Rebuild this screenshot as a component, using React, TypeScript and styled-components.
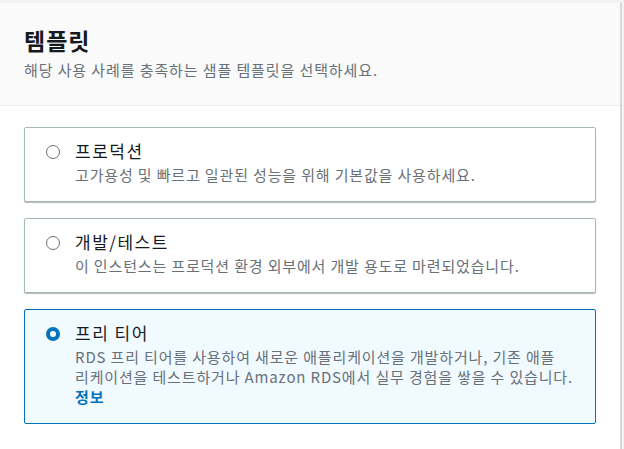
import React from "react";
import styled, { createGlobalStyle } from "styled-components";

type Option = {
  id: string;
  title: string;
  description: string;
  info?: string;
};

const options: Option[] = [
  {
    id: "prod",
    title: "프로덕션",
    description: "고가용성 및 빠르고 일관된 성능을 위해 기본값을 사용하세요.",
  },
  {
    id: "dev",
    title: "개발/테스트",
    description: "이 인스턴스는 프로덕션 환경 외부에서 개발 용도로 마련되었습니다.",
  },
  {
    id: "free",
    title: "프리 티어",
    description:
      "RDS 프리 티어를 사용하여 새로운 애플리케이션을 개발하거나, 기존 애플\n리케이션을 테스트하거나 Amazon RDS에서 실무 경험을 쌓을 수 있습니다.",
    info: "정보",
  },
];

const GlobalStyle = createGlobalStyle`
  body {
    margin: 0;
    background: #f2f3f3;
    font-family: "Noto Sans CJK KR", "Noto Sans", sans-serif;
  }
`;

export default function App() {
  const selected = "free";
  return (
    <>
      <GlobalStyle />
      <Panel>
        <Header>
          <Heading>템플릿</Heading>
          <Subtitle>해당 사용 사례를 충족하는 샘플 템플릿을 선택하세요.</Subtitle>
        </Header>
        <Body>
          {options.map((item) => {
            const active = item.id === selected;
            return (
              <Card key={item.id} $active={active}>
                <Radio $active={active} />
                <CardText>
                  <CardTitle>{item.title}</CardTitle>
                  <CardDesc>{item.description}</CardDesc>
                  {item.info && <InfoLink>{item.info}</InfoLink>}
                </CardText>
              </Card>
            );
          })}
        </Body>
      </Panel>
    </>
  );
}

const Panel = styled.div`
  margin-top: 3px;
  width: 622px;
  height: 446px;
  background: #ffffff;
  border-right: 2px solid #d5dbdb;
  box-sizing: border-box;
`;

const Header = styled.div`
  background: #fafafa;
  border-bottom: 1px solid #eaeded;
  height: 103px;
  box-sizing: border-box;
  padding: 22px 24px 0;
`;

const Heading = styled.h2`
  margin: 0;
  font-size: 23px;
  line-height: 30px;
  font-weight: 700;
  letter-spacing: 1px;
  color: #16191f;
`;

const Subtitle = styled.p`
  margin: 5px 0 0;
  font-size: 15px;
  line-height: 20px;
  letter-spacing: 0.9px;
  color: #687078;
`;

const Body = styled.div`
  display: flex;
  flex-direction: column;
  gap: 16px;
  padding: 21px 0 0 24px;
  width: 572px;
`;

const Card = styled.div<{ $active: boolean }>`
  display: flex;
  align-items: flex-start;
  gap: 15px;
  padding: 12px 18px 16px 21px;
  border: 1px solid ${(p) => (p.$active ? "#0073bb" : "#aab7b8")};
  border-radius: 2px;
  background: ${(p) => (p.$active ? "#f1faff" : "#ffffff")};
  box-shadow: ${(p) => (p.$active ? "none" : "0 1px 1px rgba(0, 28, 36, 0.3)")};
`;

const Radio = styled.span<{ $active: boolean }>`
  flex: none;
  width: 14px;
  height: 14px;
  margin-top: 5px;
  border-radius: 50%;
  box-sizing: border-box;
  background: #ffffff;
  border: ${(p) => (p.$active ? "4px solid #0073bb" : "1.5px solid #687078")};
`;

const CardText = styled.div`
  display: flex;
  flex-direction: column;
`;

const CardTitle = styled.span`
  font-size: 17px;
  line-height: 22px;
  letter-spacing: 1.5px;
  color: #16191f;
`;

const CardDesc = styled.span`
  margin-top: 3px;
  font-size: 15px;
  line-height: 20px;
  letter-spacing: 0.85px;
  white-space: pre-line;
  color: #687078;
`;

const InfoLink = styled.a`
  font-size: 15px;
  line-height: 20px;
  font-weight: 700;
  letter-spacing: 0.85px;
  color: #0073bb;
  cursor: pointer;
`;
